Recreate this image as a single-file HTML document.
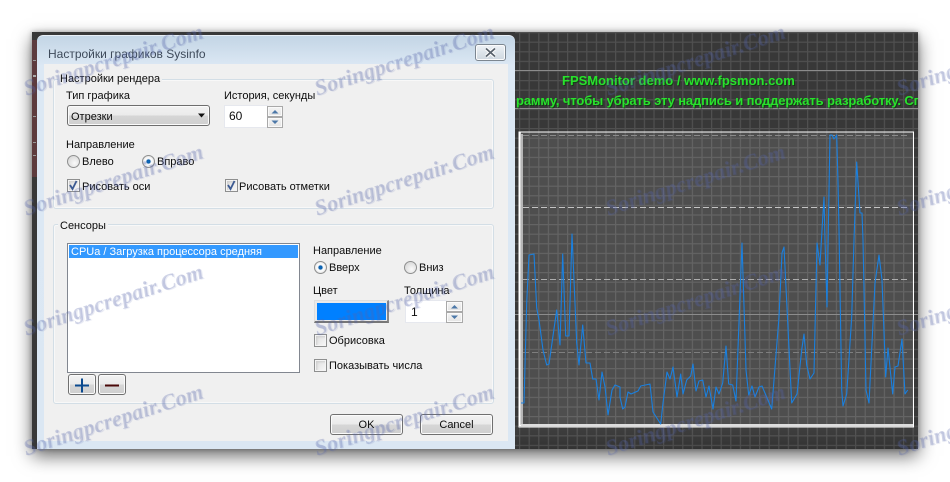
<!DOCTYPE html>
<html lang="ru"><head><meta charset="utf-8"><style>
html,body{margin:0;padding:0}
body{width:950px;height:482px;background:#fff;position:relative;overflow:hidden;font:11px/14px "Liberation Sans","Noto Sans CJK JP",sans-serif;color:#0c0c0c}
div,span{position:absolute;box-sizing:border-box}
.t{white-space:nowrap;margin-top:1px}
.panel{left:32px;top:32px;width:886px;height:417px;background:#383838;box-shadow:0 7px 17px rgba(0,0,0,.58),0 0 5px rgba(0,0,0,.3);overflow:hidden}
.win{left:37px;top:35px;width:478px;height:414px;border-radius:6px 6px 0 0;background:linear-gradient(#c3d5e5 0,#dce8f4 30px,#dbe7f3 100%);border-top:1px solid #e8eff6}
.content{left:44px;top:64px;width:464px;height:377px;background:#f0f0f0}
.group{border:1px solid #d3dee6;border-radius:3px;box-shadow:inset 0 0 0 1px #f8f8f8}
.legend{background:#f0f0f0;padding:0 2px;white-space:nowrap;margin-top:1px}
.btn{border:1px solid #707070;border-radius:3px;background:linear-gradient(#f2f2f2 0,#ebebeb 48%,#d6d6d6 52%,#cfcfcf 100%);box-shadow:inset 0 0 0 1px #fbfbfb;text-align:center}
.cb{width:13px;height:13px;background:linear-gradient(135deg,#dcdcdc,#f8f8f8);border:1px solid #8e8f8f;box-shadow:inset 0 0 0 1px #f4f4f4,inset 2px 2px 2px #ccc}
.rd{width:13px;height:13px;border-radius:50%;background:radial-gradient(circle at 60% 65%,#fafafa,#cfcfcf);border:1px solid #8e8f8f}
.rd.on{background:radial-gradient(circle,#0a6bc4 0,#0a5ca8 24%,#dfe8ef 30%,#fff 45%,#c5c5c5 100%)}
.spin{background:#fff;border:1px solid #e6e8ee;border-right:none}
.sb{border:1px solid #a9a9a9;background:linear-gradient(#f4f4f4,#e4e4e4);box-shadow:inset 0 0 0 1px #fafafa}
.wm{font:italic bold 22px/30px "Liberation Serif",serif;white-space:nowrap;color:rgba(85,100,170,.28);text-shadow:1px 1px 0 rgba(85,100,170,.12);transform:rotate(-18deg);transform-origin:0 50%;letter-spacing:.2px;z-index:50}
svg{position:absolute;left:0;top:0}
.green{color:#28e22c;font:bold 13px/16px "Liberation Sans",sans-serif;white-space:nowrap;text-shadow:1px 1px 0 rgba(0,60,0,.6)}
</style></head><body>

<div class="panel"></div>
<svg width="950" height="482" viewBox="0 0 950 482">
<defs>
<pattern id="g" x="519" y="32" width="9.6" height="9.6" patternUnits="userSpaceOnUse"><path d="M0 .6H9.6M.6 0V9.6" stroke="#fff" stroke-opacity=".12" stroke-width="1.200" fill="none"/></pattern>
<linearGradient id="bot" x1="0" y1="0" x2="0" y2="1"><stop offset="0" stop-color="#3f3f3f"/><stop offset="1" stop-color="#333"/></linearGradient>
</defs>
<rect x="515" y="427" width="403" height="22" fill="url(#bot)"/>
<rect x="519" y="132" width="394" height="295" fill="#4e4e4e"/>
<rect x="515" y="32" width="403" height="417" fill="url(#g)"/>
<path d="M515 70.500H918M515 108.500H918M515 314.500H918" stroke="#8c8c8c"/>
<rect x="519" y="132" width="394.500" height="295" fill="none" stroke="#fff"/>
<path d="M520 132V426M520 425.500H913" stroke="#fff" stroke-width="1.500"/>
<rect x="521" y="424" width="392" height="2" fill="#ddd"/>
<rect x="521" y="134" width="2" height="290" fill="#b5b5b5"/>
<g stroke-dasharray="6 3" fill="none">
<path d="M523 135.500H908" stroke="#8a8a8a"/>
<path d="M523 207.500H908" stroke="#c4c4c4"/>
<path d="M523 279.500H908" stroke="#adadad"/>
<path d="M523 352.500H908" stroke="#7e7e7e"/>
</g>
<polyline fill="none" stroke="#1a80df" stroke-width="1.100" stroke-linejoin="round" points="521,403 524,403 526.700,303 529,255 534,254 536.700,308 539,320 543,350 546.700,365 549,364 556.700,310 560,345 562.700,254 565.700,336 569,336 572,234 576.700,343 579,365 582.700,325 586,363 590,363 592.700,379 596,379 599,400 602,372 605,387 608,415 612,390 615,385 620,387 620,397 622.700,409 625,407 628,392 631,394 638,391 640.700,386 650,384 653,412 660.700,424 663,403 667,372 670,379 673,367 677,397 680.700,374 683,394 686.700,380 690.700,376 693,364 696,391 699,381 702.700,380 706,397 709,386 713,409 716,387 719,394 722.700,383 726,346 728.700,384 732.700,385 736,401 742,243 746,370 748.700,395 752,386 755,397 759,387 762,386 771.700,409 779,317 782,253 784,247 791.700,403 797,394 801.700,350 804,334 806.700,365 810,379 814,373 817,243 820,265 822,230 824,197 825,240 827,307 829,190 830,135 832,135 834,139 836.700,135 838,182 839,230 841.700,390 843,406 846.700,394 851.700,317 854,240 856.700,162 860,213 862,213 863,240 866,390 869,403 875,283 879,255 882,280 885.700,377 888,348 892.700,394 895,367 898,366 902,339 905,394 907.700,390"/>
</svg>

<div class="green" style="left:562px;top:73px">FPSMonitor demo / www.fpsmon.com</div>
<div style="left:516px;top:90px;width:402px;height:20px;overflow:hidden"><span class="green" style="left:0;top:3px;letter-spacing:-.12px">рамму, чтобы убрать эту надпись и поддержать разработку. Спасибо</span></div>

<!-- left strip -->
<div style="left:32px;top:40px;width:5px;height:137px;background:#5d3b3e"></div>
<div style="left:33px;top:60px;width:3px;height:1px;background:#999"></div>
<div style="left:33px;top:75px;width:3px;height:2px;background:#aaa"></div>
<div style="left:33px;top:116px;width:3px;height:1px;background:#999"></div>
<div style="left:33px;top:142px;width:3px;height:1px;background:#999"></div>
<div style="left:33px;top:155px;width:3px;height:1px;background:#999"></div>

<!-- dialog -->
<div class="win"></div>
<div class="t" style="left:48px;top:46px;font-size:12px;color:#3e4a5a">Настройки графиков Sysinfo</div>
<div class="btn" style="left:475px;top:44px;width:31px;height:17px;background:linear-gradient(#eef2f6,#dde4ea 50%,#cfd8e0);border-color:#7c8690">
<svg width="29" height="15" viewBox="0 0 29 15"><path d="M10 3.500L19 11.500M19 3.500L10 11.500" stroke="#fff" stroke-width="3.600" fill="none"/><path d="M10 3.500L19 11.500M19 3.500L10 11.500" stroke="#59626c" stroke-width="1.800" fill="none"/></svg></div>
<div class="content"></div>

<div class="group" style="left:53px;top:79px;width:441px;height:130px"></div>
<div class="legend" style="left:58px;top:71px">Настройки рендера</div>
<div class="t" style="left:66px;top:88px">Тип графика</div>
<div class="t" style="left:224px;top:88px">История, секунды</div>
<div class="btn" style="left:67px;top:105px;width:143px;height:21px;border-color:#6e6e6e"></div>
<div class="t" style="left:71px;top:109px">Отрезки</div>
<svg width="950" height="482" style="pointer-events:none"><path d="M198 113.500h7l-3.500 4z" fill="#111"/></svg>
<div class="spin" style="left:224px;top:105px;width:44px;height:23px"></div>
<div class="t" style="left:229px;top:108px;font-size:12px">60</div>
<div class="sb" style="left:267px;top:106px;width:16px;height:11px"></div>
<div class="sb" style="left:267px;top:117px;width:16px;height:11px"></div>
<svg width="950" height="482"><path d="M271.500 113.500h7l-3.500-3.500zM271.500 120.500h7l-3.500 3.500z" fill="#4c78a8"/></svg>

<div class="t" style="left:66px;top:137px">Направление</div>
<div class="rd" style="left:67px;top:155px"></div>
<div class="t" style="left:82px;top:154px">Влево</div>
<div class="rd on" style="left:142px;top:155px"></div>
<div class="t" style="left:157px;top:154px">Вправо</div>
<div class="cb" style="left:67px;top:179px"></div>
<div class="t" style="left:82px;top:179px">Рисовать оси</div>
<div class="cb" style="left:225px;top:179px"></div>
<div class="t" style="left:239px;top:179px">Рисовать отметки</div>
<svg width="950" height="482"><path d="M70 185l2.500 4 4-8M228 185l2.500 4 4-8" stroke="#3c5a92" stroke-width="1.800" fill="none"/></svg>

<div class="group" style="left:53px;top:224px;width:441px;height:180px"></div>
<div class="legend" style="left:58px;top:218px">Сенсоры</div>
<div style="left:67px;top:243px;width:233px;height:130px;background:#fff;border:1px solid #828790"></div>
<div style="left:69px;top:245px;width:229px;height:13px;background:#3399ff"></div>
<div class="t" style="left:71px;top:244px;color:#fff">CPUa / Загрузка процессора средняя</div>
<div class="btn" style="left:68px;top:374px;width:28px;height:21px"></div>
<div class="btn" style="left:98px;top:374px;width:28px;height:21px"></div>
<svg width="950" height="482"><path d="M75 385.500H89M82 378.500V392.500" stroke="#0b4a8f" stroke-width="2" fill="none"/><path d="M105 385.500H119" stroke="#4a0808" stroke-width="2" fill="none"/></svg>

<div class="t" style="left:313px;top:243px">Направление</div>
<div class="rd on" style="left:314px;top:261px"></div>
<div class="t" style="left:329px;top:260px">Вверх</div>
<div class="rd" style="left:404px;top:261px"></div>
<div class="t" style="left:419px;top:260px">Вниз</div>
<div class="t" style="left:313px;top:283px">Цвет</div>
<div class="t" style="left:404px;top:283px">Толщина</div>
<div style="left:314px;top:300px;width:75px;height:23px;background:#e9e9e9;border:1px solid #dedede;border-bottom:2px solid #777;border-right:2px solid #888"></div>
<div style="left:317px;top:303px;width:69px;height:17px;background:#0080ff"></div>
<div class="spin" style="left:405px;top:300px;width:42px;height:23px"></div>
<div class="t" style="left:411px;top:304px;font-size:12px">1</div>
<div class="sb" style="left:446px;top:301px;width:17px;height:11px"></div>
<div class="sb" style="left:446px;top:312px;width:17px;height:11px"></div>
<svg width="950" height="482"><path d="M451 308.500h7l-3.500-3.500zM451 315.500h7l-3.500 3.500z" fill="#4c78a8"/></svg>
<div class="cb" style="left:314px;top:334px"></div>
<div class="t" style="left:329px;top:333px">Обрисовка</div>
<div class="cb" style="left:314px;top:359px"></div>
<div class="t" style="left:329px;top:358px">Показывать числа</div>

<div class="btn" style="left:330px;top:414px;width:73px;height:21px;line-height:20px">OK</div>
<div class="btn" style="left:420px;top:414px;width:73px;height:21px;line-height:20px">Cancel</div>

<!-- watermarks -->
<div class="wm" style="left:24px;top:74px">Soringpcrepair.Com</div>
<div class="wm" style="left:24px;top:194px">Soringpcrepair.Com</div>
<div class="wm" style="left:24px;top:314px">Soringpcrepair.Com</div>
<div class="wm" style="left:24px;top:434px">Soringpcrepair.Com</div>
<div class="wm" style="left:315px;top:74px">Soringpcrepair.Com</div>
<div class="wm" style="left:315px;top:194px">Soringpcrepair.Com</div>
<div class="wm" style="left:315px;top:314px">Soringpcrepair.Com</div>
<div class="wm" style="left:315px;top:434px">Soringpcrepair.Com</div>
<div class="wm" style="left:606px;top:74px">Soringpcrepair.Com</div>
<div class="wm" style="left:606px;top:194px">Soringpcrepair.Com</div>
<div class="wm" style="left:606px;top:314px">Soringpcrepair.Com</div>
<div class="wm" style="left:606px;top:434px">Soringpcrepair.Com</div>
<div class="wm" style="left:897px;top:74px">Soringpcrepair.Com</div>
<div class="wm" style="left:897px;top:194px">Soringpcrepair.Com</div>
<div class="wm" style="left:897px;top:314px">Soringpcrepair.Com</div>
<div class="wm" style="left:897px;top:434px">Soringpcrepair.Com</div>
</body></html>
